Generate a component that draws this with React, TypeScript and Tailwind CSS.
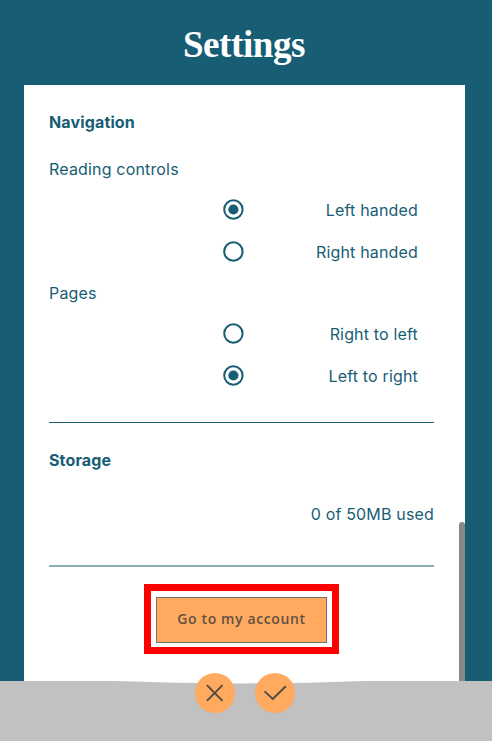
import React from "react";

function Option({ label, checked = false }: { label: string; checked?: boolean }) {
  return (
    <label className="flex h-[42px] items-center justify-between pr-4 pl-[174px]">
      <svg width="21" height="21" viewBox="0 0 21 21" fill="none" aria-hidden="true">
        <circle cx="10.4" cy="10.5" r="9.2" stroke="#175d74" strokeWidth="2" />
        {checked && <circle cx="10.4" cy="10.5" r="5.1" fill="#175d74" />}
      </svg>
      <span className="pt-px">{label}</span>
    </label>
  );
}

export default function App() {
  return (
    <div className="h-[741px] w-[496px] overflow-hidden bg-white font-['Inter',sans-serif] text-[16px] leading-6 tracking-[0.17px] text-[#175d74]">
      <div className="flex h-full w-[492px] flex-col bg-[#175d74]">
        <header className="flex h-[85px] items-center justify-center pt-[3px] pr-[4px]">
          <h1 className="font-['Liberation_Serif',serif] text-[37px] leading-none font-bold tracking-[-0.4px] text-white">Settings</h1>
        </header>
        <main className="relative ml-6 flex h-[596px] w-[441px] flex-col bg-white pr-[31px] pl-[25px]">
          <section className="h-[338px] border-b border-[#175d74] pt-[25px]">
            <h2 className="font-bold tracking-[0.14px]">Navigation</h2>
            <h3 className="mt-[23px]">Reading controls</h3>
            <div className="mt-[7.5px]">
              <Option label="Left handed" checked />
              <Option label="Right handed" />
            </div>
            <h3 className="mt-[8.5px]">Pages</h3>
            <div className="mt-[7.5px]">
              <Option label="Right to left" />
              <Option label="Left to right" checked />
            </div>
          </section>
          <section className="h-[144px] border-b-2 border-[#8badb7] pt-[25px]">
            <h2 className="font-bold tracking-[0.14px]">Storage</h2>
            <p className="mt-[30px] text-right">0 of 50MB used</p>
          </section>
          <div className="mt-[17px] ml-[95px] flex h-[70px] w-[195px] items-center justify-center border-[7px] border-[#ff0000]">
            <button className="mt-px h-[46px] w-[171px] border border-[#77706a] bg-[#ffaa5e] pb-[2px] font-['Open_Sans',sans-serif] text-[14px] font-semibold tracking-[0.62px] text-[#5f5144]">
              Go to my account
            </button>
          </div>
          <div className="absolute top-[437px] right-0 h-[159px] w-[6px] rounded-t-full bg-[#878988]" />
        </main>
        <footer className="relative flex h-[60px] justify-center gap-5 bg-[#c1c1c1] pr-[3px]">
          <svg className="absolute top-0 left-[115px]" width="250" height="4" aria-hidden="true">
            <path d="M0 0Q62 2.4 125 2.4T250 0Z" fill="white" />
          </svg>
          <button className="relative -mt-2 flex size-10 items-center justify-center rounded-full bg-[#ffaa5e]" aria-label="Cancel">
            <svg width="40" height="40" fill="none" stroke="#4e4a45" strokeWidth="1.9">
              <path d="m11.9 12.2 15.6 15.6M27.5 12.2 11.9 27.8" />
            </svg>
          </button>
          <button className="relative -mt-2 flex size-10 items-center justify-center rounded-full bg-[#ffaa5e]" aria-label="Confirm">
            <svg width="40" height="40" fill="none" stroke="#4e4a45" strokeWidth="1.9">
              <path d="m9.6 18.4 8.2 7.6L30.8 13.3" />
            </svg>
          </button>
        </footer>
      </div>
    </div>
  );
}
